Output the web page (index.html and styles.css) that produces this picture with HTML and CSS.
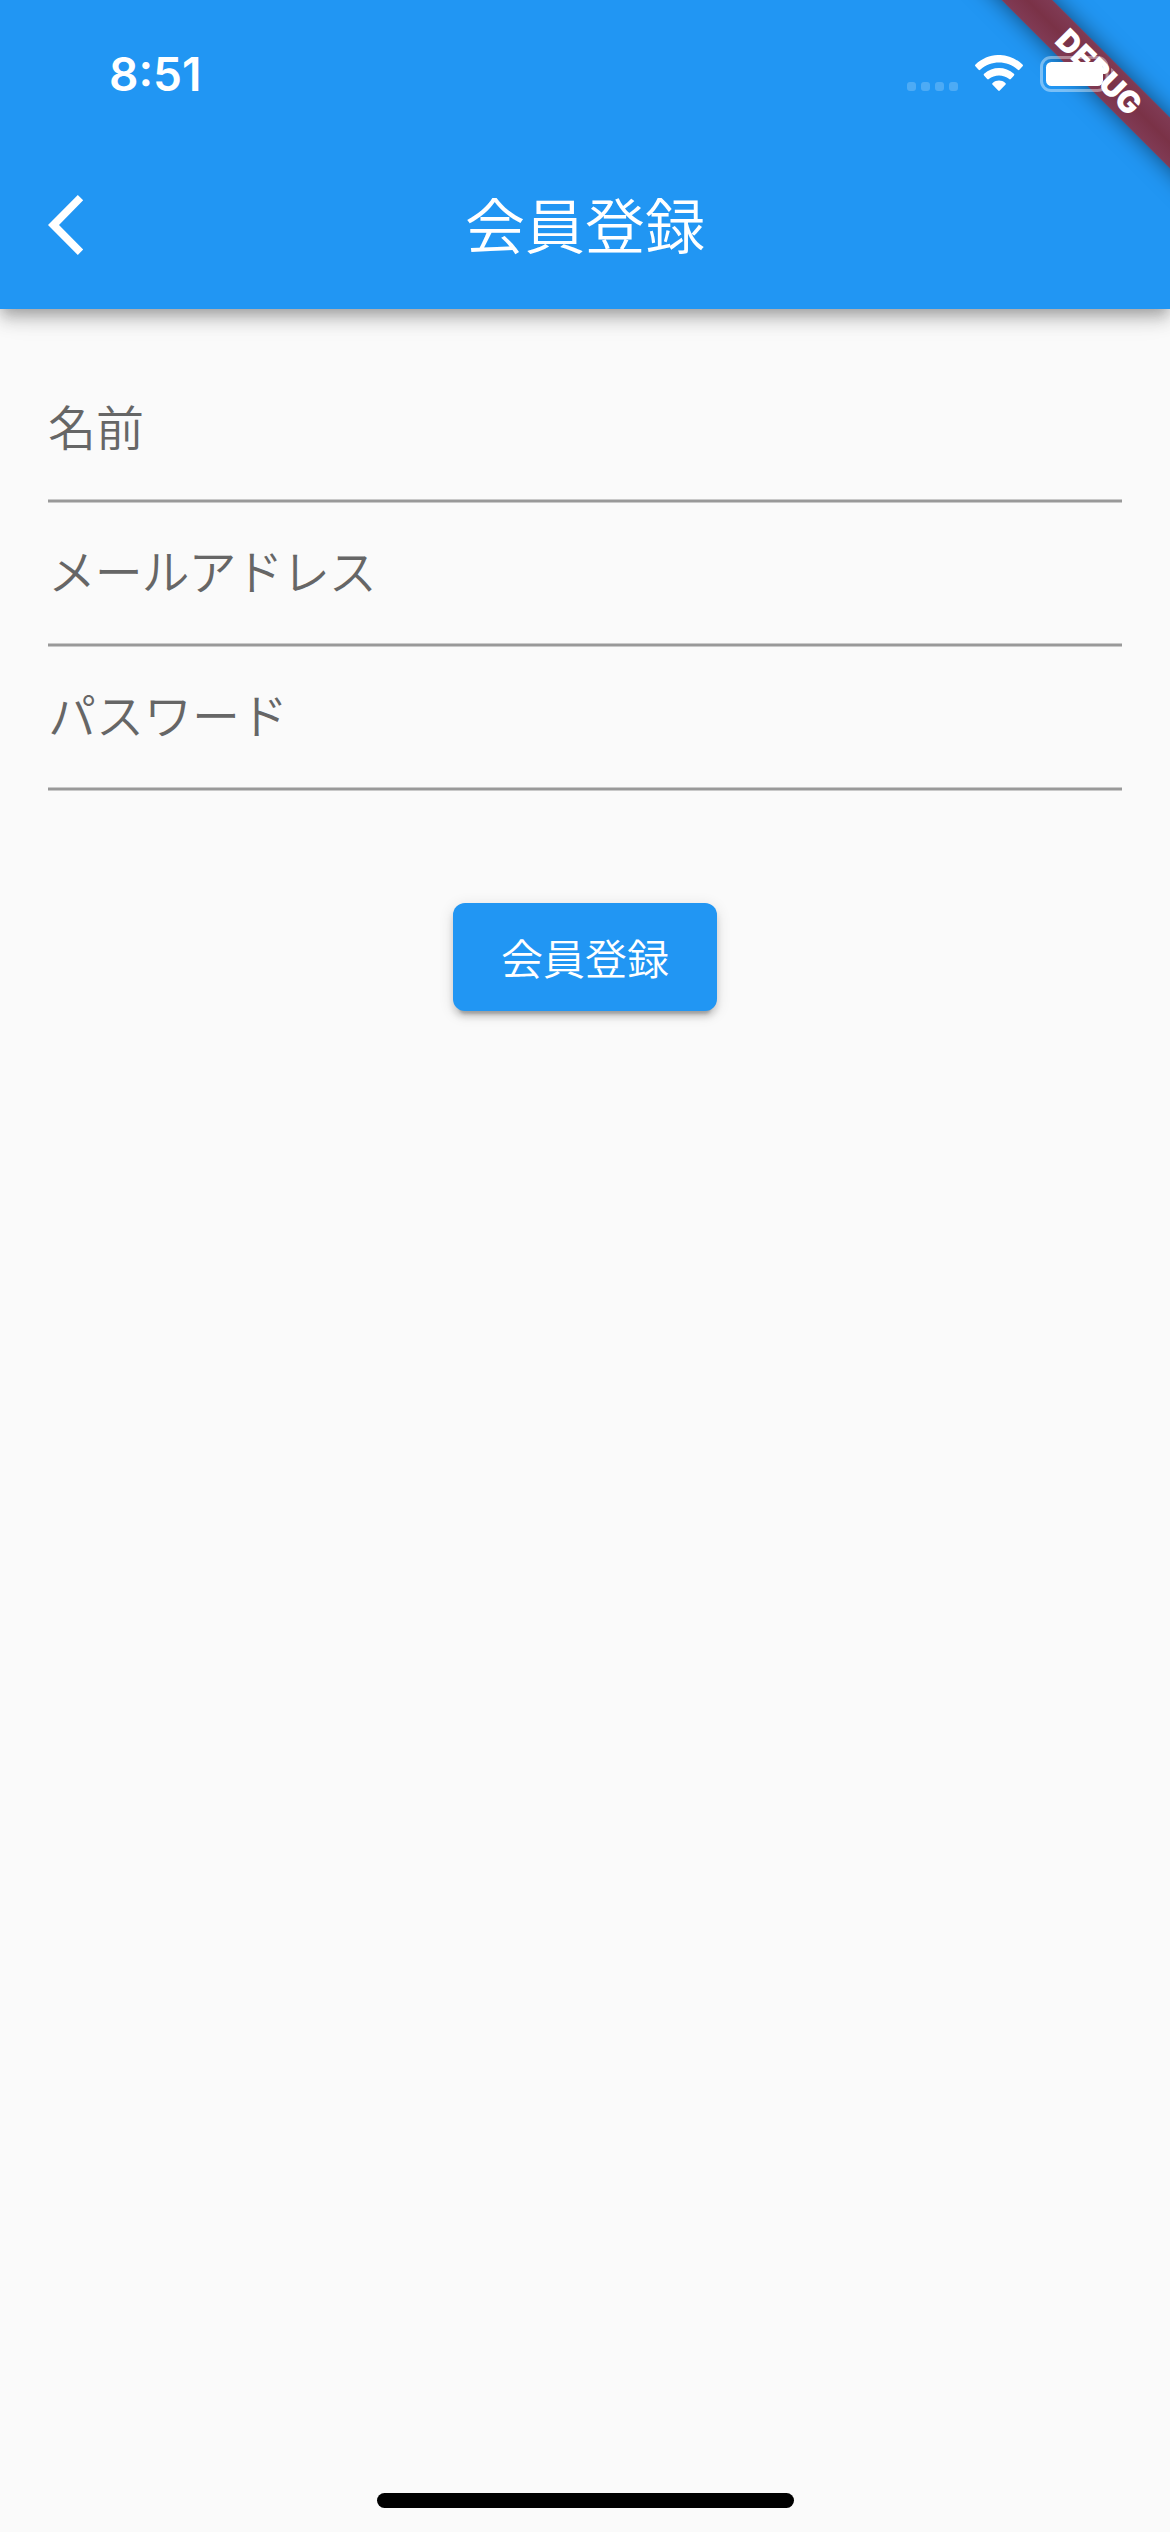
FILE: index.html
```html
<!DOCTYPE html>
<html lang="ja">

<head>
    <meta charset="UTF-8">
    <meta name="viewport" content="width=device-width, initial-scale=1.0">
    <title>会員登録</title>
    <link rel="stylesheet" href="styles.css">
</head>

<body>
    <header class="header">
        <!-- Status bar -->
        <div class="status-bar">
            <div class="time">8:51</div>
            <div class="status-icons">
                <div class="signal">
                    <span></span><span></span><span></span><span></span>
                </div>
                <svg class="wifi" width="48" height="36" viewBox="0 0 48 36" fill="#fff">
                    <path d="M0.4 11.2Q-0.4 10.3 0.5 9.5C14 -3.2 34 -3.2 47.5 9.5Q48.4 10.3 47.6 11.2L44.4 14.8Q43.6 15.6 42.8 14.8C32 5.2 16 5.2 5.2 14.8Q4.4 15.6 3.6 14.8Z" />
                    <path d="M9 20.4Q8.2 19.5 9.1 18.7C17.5 11 30.5 11 38.9 18.7Q39.8 19.5 39 20.4L35.8 24Q35 24.8 34.2 24.1C28.5 19.3 19.5 19.3 13.8 24.1Q13 24.8 12.2 24Z" />
                    <path d="M17.4 29.5Q16.7 28.6 17.7 27.9C21.5 24.8 26.5 24.8 30.3 27.9Q31.3 28.6 30.6 29.5L24.8 35.6Q24 36.3 23.2 35.6Z" />
                </svg>
                <svg class="battery" width="76" height="36" viewBox="0 0 76 36">
                    <rect x="1.5" y="1.5" width="65.5" height="33" rx="9.5" fill="none" stroke="#fff" stroke-opacity="0.4" stroke-width="3" />
                    <path d="M71 12v12c5-2 5-10 0-12z" fill="#fff" fill-opacity="0.4" />
                    <rect x="6" y="6" width="57" height="24" rx="5.5" fill="#fff" />
                </svg>
            </div>
        </div>

        <!-- App bar -->
        <div class="app-bar">
            <a class="back">
                <svg width="36" height="60" viewBox="0 0 36 60" fill="#fff">
                    <path d="M29.8 0L35.2 5.3 11 30 35.2 54.5 29.8 60 0 30Z" />
                </svg>
            </a>
            <h1 class="title">会員登録</h1>
        </div>
    </header>

    <div class="debug-corner">
        <div class="debug-banner">DEBUG</div>
    </div>

    <!-- Form -->
    <main class="form">
        <div class="field">
            <div class="label">名前</div>
            <div class="underline"></div>
        </div>
        <div class="field">
            <div class="label label-tight">メールアドレス</div>
            <div class="underline"></div>
        </div>
        <div class="field">
            <div class="label">パスワード</div>
            <div class="underline"></div>
        </div>
        <button class="submit">会員登録</button>
    </main>

    <div class="home-indicator"></div>
</body>

</html>
```
FILE: styles.css
```css
* {
    margin: 0;
    padding: 0;
    box-sizing: border-box;
}

body {
    position: relative;
    width: 1170px;
    height: 2532px;
    background: #fafafa;
    font-family: 'Noto Sans CJK JP', sans-serif;
    font-weight: 350;
    display: flex;
    flex-direction: column;
    overflow: hidden;
}

/* HEADER */
.header {
    height: 309px;
    background: #2196f3;
    color: #fff;
    box-shadow: 0 6px 12px -3px rgba(0, 0, 0, 0.2), 0 12px 15px rgba(0, 0, 0, 0.14), 0 3px 30px rgba(0, 0, 0, 0.12);
}

.status-bar {
    height: 141px;
    padding: 0 54px 0 109px;
    display: flex;
    justify-content: space-between;
}

.time {
    padding-top: 46px;
    font-family: Inter, sans-serif;
    font-size: 46px;
    font-weight: 600;
    line-height: 56px;
}

/* Above the debug banner, like the system bar */
.status-icons {
    position: relative;
    z-index: 2;
    height: 36px;
    margin-top: 56px;
    display: flex;
}

.signal {
    display: flex;
    align-items: flex-end;
    gap: 5px;
    padding-bottom: 1px;
    margin-right: 17px;
}

.signal span {
    width: 9px;
    height: 9px;
    border-radius: 3px;
    background: rgba(255, 255, 255, 0.2);
}

.wifi {
    margin-top: -1px;
    margin-right: 17px;
}

.app-bar {
    height: 168px;
    display: grid;
    grid-template-columns: 168px 1fr 168px;
    align-items: center;
}

.back {
    padding-left: 48px;
    display: flex;
}

.title {
    padding-bottom: 4px;
    font-size: 60px;
    font-weight: 350;
    line-height: 84px;
    text-align: center;
}

/* DEBUG BANNER */
.debug-corner {
    position: absolute;
    top: 0;
    right: 0;
    width: 300px;
    height: 300px;
    overflow: hidden;
}

.debug-banner {
    position: absolute;
    top: 54px;
    left: 29px;
    width: 400px;
    height: 36px;
    background: linear-gradient(#803b55, #7a3247 50%, #803b55);
    box-shadow: 0 0 22px rgba(0, 0, 0, 0.5);
    color: #fff;
    font-family: Inter, sans-serif;
    font-size: 30.6px;
    font-weight: 900;
    line-height: 36px;
    text-align: center;
    transform: rotate(45deg);
}

/* FORM */
.form {
    flex: 1;
    padding: 50px 48px 0;
    display: flex;
    flex-direction: column;
    align-items: center;
}

.field {
    width: 100%;
    height: 144px;
    display: flex;
    flex-direction: column;
    justify-content: space-between;
}

.label {
    padding-top: 31px;
    color: #666;
    font-size: 48px;
    line-height: 70px;
}

.label-tight {
    letter-spacing: -1.2px;
}

.underline {
    height: 4px;
    background: #999;
    border-top: 1px solid #c9c9c9;
    border-bottom: 1px solid #c9c9c9;
}

.submit {
    width: 264px;
    height: 108px;
    margin-top: 112px;
    padding-bottom: 2px;
    border: none;
    border-radius: 12px;
    background: #2196f3;
    box-shadow: 0 9px 3px -6px rgba(0, 0, 0, 0.2), 0 6px 6px rgba(0, 0, 0, 0.14), 0 3px 15px rgba(0, 0, 0, 0.12);
    color: #fff;
    font-family: inherit;
    font-size: 42px;
    font-weight: 350;
}

.home-indicator {
    width: 417px;
    height: 15px;
    margin: 0 auto 24px;
    border-radius: 8px;
    background: #000;
}
```
